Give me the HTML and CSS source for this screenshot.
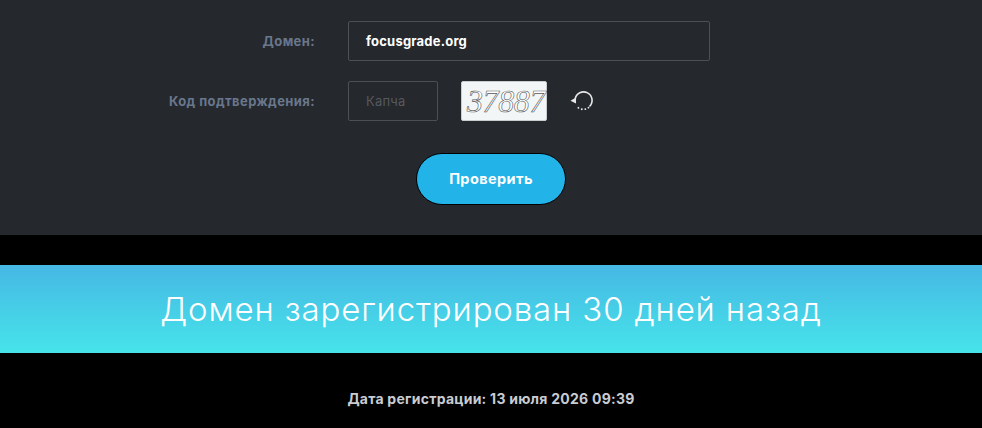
FILE: index.html
```html
<!DOCTYPE html>
<html lang="ru">
	<head>
		<meta charset="UTF-8">
		<title>Домен</title>
		<link rel="stylesheet" href="styles.css">
	</head>
	<body>
		<div class="panel">
			<div class="row">
				<label class="label">Домен:</label>
				<div class="input domain">focusgrade.org</div>
			</div>
			<div class="row">
				<label class="label">Код подтверждения:</label>
				<div class="input captcha">Капча</div>
				<svg class="captcha-img" width="86" height="40" viewBox="0 0 86 40">
					<rect x="0.5" y="0.5" width="85" height="39" rx="1.5" fill="#f3f6f6" stroke="#c9cccc"/>
					<text class="captcha-text" x="6" y="31">37887</text>
				</svg>
				<svg class="refresh" width="24" height="24" viewBox="0 0 24 24" fill="none">
					<path d="M5.2 10 A8.5 8.5 0 1 1 19.5 17.5" stroke="#e8e8e8" stroke-width="1.6"/>
					<path d="M18.5 18.6 A8.5 8.5 0 0 1 7 17.6" stroke="#e8e8e8" stroke-width="1.8" stroke-linecap="round" stroke-dasharray="0.1 3.4"/>
					<path d="M0.5 11.7 L6 8.4 L6 14.6 Z" fill="#e8e8e8"/>
				</svg>
			</div>
			<div class="actions">
				<button class="btn">Проверить</button>
			</div>
		</div>
		<div class="banner">Домен зарегистрирован 30 дней назад</div>
		<div class="info">Дата регистрации: 13 июля 2026 09:39</div>
	</body>
</html>
```

FILE: styles.css
```css
* {
	margin: 0;
	padding: 0;
	box-sizing: border-box;
}
body {
	background-color: #000;
	font-family: "Inter", "Liberation Sans", sans-serif;
	overflow: hidden;
}
.panel {
	height: 235px;
	padding-top: 21px;
	background-color: #25282d;
}
.row {
	display: flex;
	align-items: center;
	height: 40px;
	margin-bottom: 20px;
}
.label {
	width: 315px;
	text-align: right;
	font-size: 13px;
	font-weight: 700;
	letter-spacing: 0.4px;
	color: #69778c;
}
.input {
	height: 40px;
	margin-left: 33px;
	padding-left: 17px;
	line-height: 38px;
	border: 1px solid #4c4f54;
	border-radius: 2px;
	font-size: 13px;
}
.domain {
	width: 362px;
	font-weight: 700;
	letter-spacing: 0.2px;
	color: #fff;
}
.captcha {
	width: 90px;
	letter-spacing: 0.2px;
	color: #55585d;
}
.captcha-img {
	margin-left: 23px;
}
.captcha-text {
	font-family: "Liberation Serif", serif;
	font-style: italic;
	font-size: 32px;
	letter-spacing: -0.4px;
	fill: #fff;
	stroke: #55585a;
	stroke-width: 0.6px;
}
.refresh {
	margin-left: 23px;
}
.actions {
	display: flex;
	justify-content: center;
	padding-top: 12px;
}
.btn {
	width: 150px;
	height: 52px;
	padding-bottom: 2px;
	border: 1px solid #000;
	border-radius: 26px;
	background-color: #22b3e8;
	color: #fff;
	font-family: inherit;
	font-size: 14.5px;
	font-weight: 700;
	letter-spacing: 0.4px;
}
.banner {
	height: 88px;
	margin-top: 30px;
	background: linear-gradient(#46b8e4, #46e4ea);
	color: #fff;
	text-align: center;
	font-size: 33px;
	font-weight: 300;
	letter-spacing: 0.85px;
	line-height: 88px;
}
.info {
	padding-top: 37px;
	text-align: center;
	font-size: 14px;
	font-weight: 700;
	letter-spacing: 0.25px;
	color: #c8ccd2;
}
```
